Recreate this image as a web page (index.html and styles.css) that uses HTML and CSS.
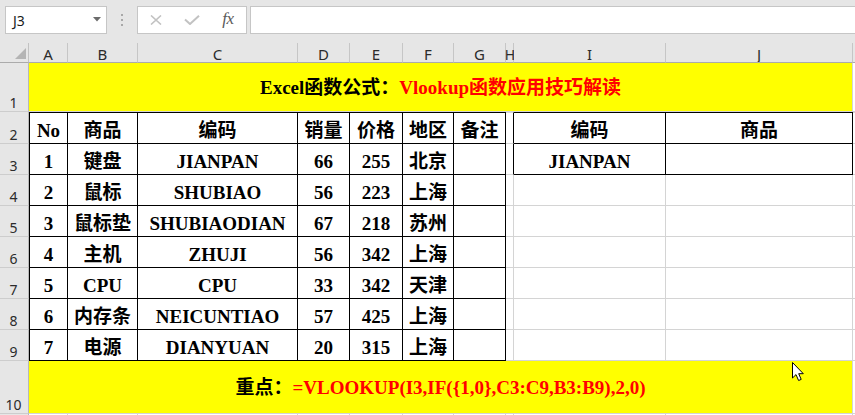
FILE: index.html
```html
<!DOCTYPE html>
<html>
<head>
<meta charset="utf-8">
<link rel="stylesheet" href="styles.css">
</head>
<body>
<div class="toolbar">
  <div class="namebox">
    <span class="ref">J3</span>
    <svg class="dd" width="8" height="5" viewBox="0 0 8 5"><polygon points="0,0 8,0 4,4.5" fill="#6b6b6b"/></svg>
  </div>
  <div class="dots"><i></i><i></i><i></i></div>
  <div class="fbtns">
    <span class="slot"><svg width="12" height="10" viewBox="0 0 12 10"><path d="M1,0.5 L11,9.5 M11,0.5 L1,9.5" stroke="#c2c2c2" stroke-width="1.6" fill="none"/></svg></span>
    <span class="slot"><svg width="16" height="10" viewBox="0 0 16 10"><path d="M1,4.5 L6,9 L15,0.8" stroke="#c2c2c2" stroke-width="2" fill="none"/></svg></span>
    <span class="slot fx">fx</span>
  </div>
  <div class="finput"></div>
</div>

<div class="sheet">
  <div class="corner"><svg width="29" height="19" viewBox="0 0 29 19"><polygon points="26,5 26,16 15,16" fill="#b4b4b4"/></svg></div>
  <div class="ch">A</div><div class="ch">B</div><div class="ch">C</div><div class="ch">D</div><div class="ch">E</div><div class="ch">F</div><div class="ch">G</div><div class="ch narrow">H</div><div class="ch">I</div><div class="ch">J</div><div class="ch rem-h"></div>

  <div class="rh">1</div>
  <div class="m">Excel函数公式：<span class="red">Vlookup函数应用技巧解读</span></div>
  <div class="c rem"></div>

  <div class="rh">2</div>
  <div class="c t tt tl">No</div><div class="c t tt">商品</div><div class="c t tt">编码</div><div class="c t tt">销量</div><div class="c t tt">价格</div><div class="c t tt">地区</div><div class="c t tt">备注</div>
  <div class="c gt hb"></div><div class="c t tt">编码</div><div class="c t tt">商品</div><div class="c rem gt"></div>

  <div class="rh">3</div>
  <div class="c t tl">1</div><div class="c t">键盘</div><div class="c t">JIANPAN</div><div class="c t">66</div><div class="c t">255</div><div class="c t">北京</div><div class="c t"></div>
  <div class="c hb"></div><div class="c t">JIANPAN</div><div class="c t"></div><div class="c rem"></div>

  <div class="rh">4</div>
  <div class="c t tl">2</div><div class="c t">鼠标</div><div class="c t">SHUBIAO</div><div class="c t">56</div><div class="c t">223</div><div class="c t">上海</div><div class="c t"></div>
  <div class="c"></div><div class="c"></div><div class="c"></div><div class="c rem"></div>

  <div class="rh">5</div>
  <div class="c t tl">3</div><div class="c t">鼠标垫</div><div class="c t">SHUBIAODIAN</div><div class="c t">67</div><div class="c t">218</div><div class="c t">苏州</div><div class="c t"></div>
  <div class="c"></div><div class="c"></div><div class="c"></div><div class="c rem"></div>

  <div class="rh">6</div>
  <div class="c t tl">4</div><div class="c t">主机</div><div class="c t">ZHUJI</div><div class="c t">56</div><div class="c t">342</div><div class="c t">上海</div><div class="c t"></div>
  <div class="c"></div><div class="c"></div><div class="c"></div><div class="c rem"></div>

  <div class="rh">7</div>
  <div class="c t tl">5</div><div class="c t">CPU</div><div class="c t">CPU</div><div class="c t">33</div><div class="c t">342</div><div class="c t">天津</div><div class="c t"></div>
  <div class="c"></div><div class="c"></div><div class="c"></div><div class="c rem"></div>

  <div class="rh">8</div>
  <div class="c t tl">6</div><div class="c t">内存条</div><div class="c t">NEICUNTIAO</div><div class="c t">57</div><div class="c t">425</div><div class="c t">上海</div><div class="c t"></div>
  <div class="c"></div><div class="c"></div><div class="c"></div><div class="c rem"></div>

  <div class="rh">9</div>
  <div class="c t tl">7</div><div class="c t">电源</div><div class="c t">DIANYUAN</div><div class="c t">20</div><div class="c t">315</div><div class="c t">上海</div><div class="c t"></div>
  <div class="c"></div><div class="c"></div><div class="c"></div><div class="c rem"></div>

  <div class="rh">10</div>
  <div class="m">重点：<span class="red">=VLOOKUP(I3,IF({1,0},C3:C9,B3:B9),2,0)</span></div>
  <div class="c rem"></div>

  <div class="rh last"></div>
  <div class="c e"></div><div class="c e"></div><div class="c e"></div><div class="c e"></div><div class="c e"></div><div class="c e"></div><div class="c e"></div><div class="c e"></div><div class="c e"></div><div class="c e"></div><div class="c e rem"></div>
</div>

<svg class="cursor" width="14" height="21" viewBox="0 0 14 21"><path d="M1.5,1.5 L1.5,17 L5,13.6 L7.6,19.5 L10.2,18.4 L7.7,12.7 L12.3,12.7 Z" fill="#fff" stroke="#000" stroke-width="1" stroke-linejoin="miter"/></svg>
</body>
</html>
```

FILE: styles.css
```css
html, body {
  margin: 0;
  padding: 0;
}
body {
  width: 855px;
  height: 415px;
  overflow: hidden;
  position: relative;
  background: #e6e6e6;
  font-family: "Noto Sans", "Liberation Sans", sans-serif;
}

/* ---------- formula bar ---------- */
.toolbar {
  height: 43px;
  box-sizing: border-box;
  padding: 6px 0 0 5px;
  display: flex;
  align-items: flex-start;
  background: #e6e6e6;
}
.namebox {
  width: 102px;
  height: 28px;
  box-sizing: border-box;
  background: #fff;
  border: 1px solid #c6c6c6;
  display: flex;
  align-items: center;
  justify-content: space-between;
  padding: 1px 5px 0 7px;
}
.ref {
  font-size: 14px;
  color: #1a1a1a;
  line-height: 1;
}
.dd {
  display: block;
  margin-top: -3px;
}
.dots {
  width: 30px;
  height: 28px;
  display: flex;
  flex-direction: column;
  align-items: center;
  justify-content: center;
  gap: 3px;
}
.dots i {
  display: block;
  width: 2px;
  height: 2px;
  background: #a8a8a8;
}
.fbtns {
  width: 110px;
  height: 28px;
  box-sizing: border-box;
  background: #fff;
  border: 1px solid #c6c6c6;
  display: flex;
  align-items: center;
  margin-right: 3px;
}
.slot {
  width: 36px;
  height: 26px;
  display: flex;
  align-items: center;
  justify-content: center;
}
.slot svg { display: block; }
.fx {
  font-family: "Liberation Serif", serif;
  font-style: italic;
  font-size: 17px;
  color: #5a5a5a;
  letter-spacing: -0.5px;
  padding-bottom: 2px;
  box-sizing: border-box;
}
.finput {
  flex: 1;
  height: 28px;
  box-sizing: border-box;
  background: #fff;
  border: 1px solid #c6c6c6;
  border-right: none;
}

/* ---------- sheet ---------- */
.sheet {
  display: grid;
  grid-template-columns: 29px 39px 70px 160px 52px 53px 51px 52px 8px 152px 187px 2px;
  grid-template-rows: 20px 49px 32px repeat(7, 31px) 53px 1px;
  background: #fff;
}
.sheet > div {
  box-sizing: border-box;
  min-width: 0;
}
.corner {
  background: #e6e6e6;
  border-right: 1px solid #c2c2c2;
  border-bottom: 1px solid #ababab;
}
.corner svg { display: block; }
.ch {
  background: #e6e6e6;
  border-right: 1px solid #c6c6c6;
  border-bottom: 1px solid #ababab;
  display: flex;
  align-items: flex-end;
  justify-content: center;
  font-size: 15px;
  line-height: 15px;
  color: #2b2b2b;
  overflow: hidden;
}
.ch.narrow {
  overflow: visible;
  font-size: 14px;
  letter-spacing: -1px;
}
.rem-h { border-right: none; }
.rh {
  background: #e6e6e6;
  border-right: 1px solid #b8b8b8;
  border-bottom: 1px solid #cdcdcd;
  display: flex;
  align-items: flex-end;
  justify-content: center;
  font-size: 14px;
  line-height: 14px;
  padding: 0 1px 1px 0;
  color: #2b2b2b;
}
.rh.last { border-bottom: none; }

.c {
  background: #fff;
  border-right: 1px solid #d4d4d4;
  border-bottom: 1px solid #d4d4d4;
  display: flex;
  align-items: center;
  justify-content: center;
  padding-top: 4px;
  font-family: "Liberation Serif", "Noto Sans CJK SC", serif;
  font-weight: bold;
  font-size: 19px;
  line-height: 1;
  color: #000;
  white-space: nowrap;
  overflow: hidden;
}
.c.e { border-bottom: none; padding: 0; }
.t {
  border-right-color: #000;
  border-bottom-color: #000;
}
.tl { border-left: 1px solid #000; }
.tt { border-top: 1px solid #000; }
.gt { border-top: 1px solid #d4d4d4; }
.hb { border-right-color: #000; }
.rem { border-right: none; }

.m {
  grid-column: span 10;
  background: #ffff00;
  border-right: 1px solid #d4d4d4;
  border-bottom: 1px solid #d4d4d4;
  display: flex;
  align-items: center;
  justify-content: center;
  font-family: "Liberation Serif", "Noto Sans CJK SC", serif;
  font-weight: bold;
  font-size: 19px;
  line-height: 1;
  color: #000;
  white-space: nowrap;
}
.red { color: #ff0000; }

.cursor {
  position: absolute;
  left: 791px;
  top: 361px;
  display: block;
}
```
